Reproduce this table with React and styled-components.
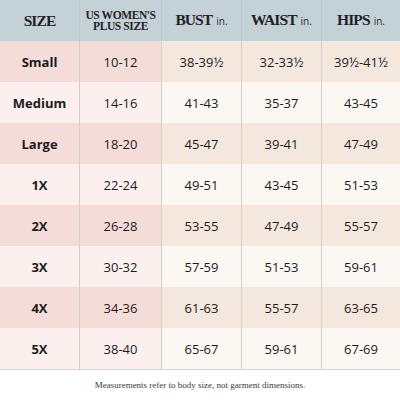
import React from 'react';
import styled, { createGlobalStyle } from 'styled-components';

const GlobalStyle = createGlobalStyle`
    html, body {
        margin: 0;
        padding: 0;
        background: #ffffff;
    }
`

const Page = styled.div`
    width: 400px;
    height: 400px;
    background: #ffffff;
    display: flex;
    flex-direction: column;
`

const Table = styled.div`
    display: grid;
    grid-template-columns: 79px 82px 80px 80px 79px;
    grid-template-rows: 41px repeat(8, 41px);
    border-bottom: 1px solid #d6d2cf;
`

const HeadCell = styled.div`
    background: #c4d1d7;
    display: flex;
    align-items: center;
    justify-content: center;
    text-align: center;
    border-left: ${p => p.$first ? 'none' : '1px solid #bccbd1'};
`

const Label = styled.span`
    font-family: "Liberation Serif", "DejaVu Serif", serif;
    font-weight: bold;
    color: #1f2326;
    font-size: ${p => p.$small ? '11.5px' : '15.5px'};
    line-height: ${p => p.$small ? '11px' : '20px'};
    letter-spacing: ${p => p.$small ? '-0.4px' : '-0.9px'};
    margin-top: ${p => p.$small ? '1px' : '0'};
`

const Unit = styled.span`
    font-family: "Open Sans", "DejaVu Sans", sans-serif;
    font-weight: normal;
    font-size: 10px;
    letter-spacing: 0;
    margin-left: 4px;
    color: #2a2e31;
`

const Cell = styled.div`
    display: flex;
    align-items: center;
    justify-content: center;
    font-family: "Open Sans", "Lato", sans-serif;
    font-size: 13px;
    color: #1c1c1c;
    font-weight: ${p => p.$bold ? 700 : 400};
    background: ${p => p.$pink
        ? (p.$odd ? '#f4dcd9' : '#fbf0ee')
        : (p.$odd ? '#f4e7de' : '#fbf7f3')};
    border-left: ${p => p.$first ? 'none' : '1px solid #d4cfcc'};
`

const Note = styled.div`
    flex: 1;
    display: flex;
    align-items: center;
    justify-content: center;
    font-family: "Liberation Serif", "DejaVu Serif", serif;
    font-size: 9px;
    color: #3a3a3a;
    padding-bottom: 1px;
`

const rows = [
    ['Small', '10-12', '38-39½', '32-33½', '39½-41½'],
    ['Medium', '14-16', '41-43', '35-37', '43-45'],
    ['Large', '18-20', '45-47', '39-41', '47-49'],
    ['1X', '22-24', '49-51', '43-45', '51-53'],
    ['2X', '26-28', '53-55', '47-49', '55-57'],
    ['3X', '30-32', '57-59', '51-53', '59-61'],
    ['4X', '34-36', '61-63', '55-57', '63-65'],
    ['5X', '38-40', '65-67', '59-61', '67-69'],
]

const App = () => {
    return (
        <Page>
            <GlobalStyle />
            <Table>
                <HeadCell $first><Label>SIZE</Label></HeadCell>
                <HeadCell><Label $small>US WOMEN'S<br />PLUS SIZE</Label></HeadCell>
                <HeadCell><Label>BUST<Unit>in.</Unit></Label></HeadCell>
                <HeadCell><Label>WAIST<Unit>in.</Unit></Label></HeadCell>
                <HeadCell><Label>HIPS<Unit>in.</Unit></Label></HeadCell>
                {rows.map((r, i) => r.map((v, j) => (
                    <Cell
                        key={i + '-' + j}
                        $first={j === 0}
                        $bold={j === 0}
                        $pink={j < 2}
                        $odd={i % 2 === 0}
                    >
                        {v}
                    </Cell>
                )))}
            </Table>
            <Note>Measurements refer to body size, not garment dimensions.</Note>
        </Page>
    )
}

export default App
